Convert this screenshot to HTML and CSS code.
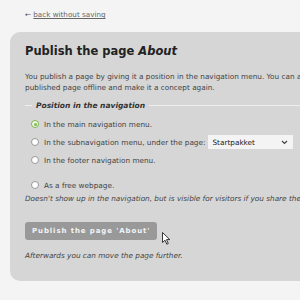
FILE: index.html
```html
<!DOCTYPE html>
<html lang="en">
<head>
  <meta charset="UTF-8">
  <title>Publish the page About</title>
  <link rel="stylesheet" href="styles.css">
</head>
<body>
  <div class="page">
    <p class="back">&larr; <a href="#">back without saving</a></p>

    <div class="card">
      <h1>Publish the page <em>About</em></h1>
      <p class="intro">You publish a page by giving it a position in the navigation menu. You can always take a published page offline and make it a concept again.</p>

      <fieldset class="positions">
        <legend>Position in the navigation</legend>
        <label class="option"><span class="radio checked"></span>In the main navigation menu.</label>
        <label class="option"><span class="radio"></span>In the subnavigation menu, under the page:
          <span class="select">Startpakket <svg width="7" height="5" viewBox="0 0 7 5"><path d="M1 1l2.5 2.5L6 1" fill="none" stroke="#444" stroke-width="1.2"/></svg></span>
        </label>
        <label class="option"><span class="radio"></span>In the footer navigation menu.</label>
        <label class="option free"><span class="radio"></span>As a free webpage.</label>
        <p class="note">Doesn't show up in the navigation, but is visible for visitors if you share the link.</p>
      </fieldset>

      <div class="actions">
        <button class="publish">Publish the page 'About'</button>
        <svg class="cursor" width="9" height="13" viewBox="0 0 9 13"><path d="M0.5 0.5v10l2.5-2.3 1.8 4 1.5-.7-1.8-3.9h3.3z" fill="#fff" stroke="#222" stroke-width="0.9"/></svg>
      </div>
      <p class="after">Afterwards you can move the page further.</p>
    </div>
  </div>
</body>
</html>
```

FILE: styles.css
```css
body {
  margin: 0;
  background-color: #f4f4f4;
  font-family: 'DejaVu Sans', Verdana, sans-serif;
  color: #3a3a3a;
  overflow: hidden;
}
.page {
  padding: 10px 0 0 10px;
  width: 360px;
}
.back {
  margin: 0 0 13px 15px;
  font-size: 7.2px;
  color: #555;
}
.back a {
  color: #666;
}
.card {
  background-color: #d6d6d6;
  border-radius: 10px;
  padding: 12px 15px 22px 15px;
  height: 215px;
}
h1 {
  margin: 0 0 13px 0;
  font-size: 11.5px;
  color: #222;
}
.intro {
  margin: 0 0 8px 0;
  font-size: 7.3px;
  line-height: 11px;
  color: #444;
}
.positions {
  margin: 0;
  padding: 5px 0 0 6px;
  border: none;
  border-top: 1px solid #eee;
}
legend {
  padding: 0 4px;
  margin-left: 1px;
  font-size: 7.5px;
  font-weight: bold;
  font-style: italic;
  color: #333;
}
.option {
  display: flex;
  align-items: center;
  height: 18px;
  font-size: 7.3px;
  color: #444;
}
.option.free {
  margin-top: 7px;
}
.radio {
  width: 8px;
  height: 8px;
  border: 1px solid #999;
  border-radius: 50%;
  background: #fff;
  margin-right: 5px;
  box-sizing: border-box;
  position: relative;
}
.radio.checked {
  border-color: #7cb84a;
  background: #f2f8ec;
}
.radio.checked::after {
  content: "";
  position: absolute;
  left: 1.5px;
  top: 1.5px;
  width: 3px;
  height: 3px;
  border-radius: 50%;
  background: #7cb84a;
}
.select {
  display: inline-flex;
  align-items: center;
  justify-content: space-between;
  width: 76px;
  height: 14px;
  margin-left: 3px;
  padding: 0 5px 0 4px;
  background: #f4f4f4;
  font-size: 7.3px;
  color: #222;
}
.note {
  margin: 0 0 0 -6px;
  font-size: 7.3px;
  font-style: italic;
  color: #444;
  white-space: nowrap;
}
.actions {
  position: relative;
  margin-top: 15px;
}
.publish {
  background-color: #999;
  color: #f4f4f4;
  border: none;
  border-radius: 3px;
  padding: 4px 7px;
  height: 18px;
  font-family: 'DejaVu Sans', Verdana, sans-serif;
  font-size: 7px;
  font-weight: bold;
  letter-spacing: 0.9px;
}
.cursor {
  position: absolute;
  left: 137px;
  top: 14px;
}
.after {
  margin: 11px 0 0 0;
  font-size: 7.3px;
  font-style: italic;
  color: #444;
}
```
